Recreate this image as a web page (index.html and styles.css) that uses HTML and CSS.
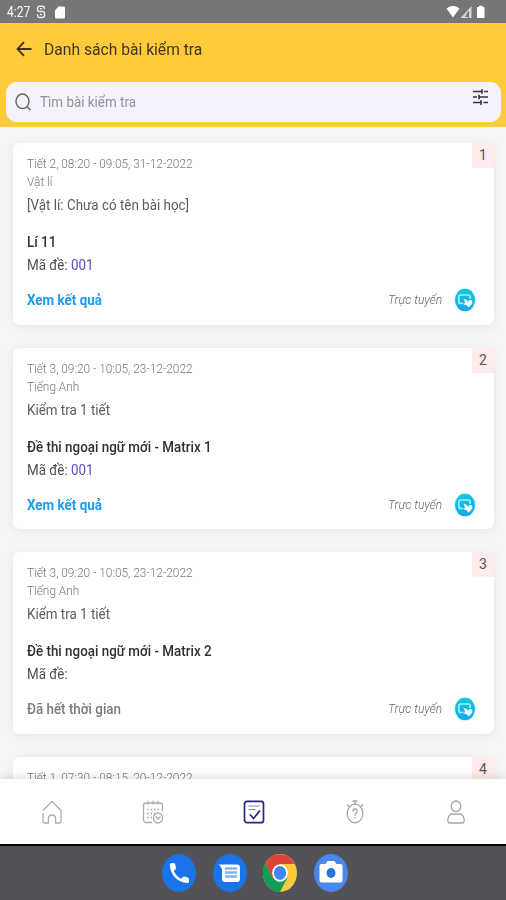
FILE: index.html
```html
<!DOCTYPE html>
<html lang="vi">
<head>
<meta charset="utf-8">
<title>Danh sách bài kiểm tra</title>
<link rel="stylesheet" href="styles.css">
</head>
<body>
<svg width="0" height="0" class="defs">
  <defs>
    <linearGradient id="cyan" x1="0" y1="0" x2="0" y2="1"><stop offset="0" stop-color="#10c9dc"/><stop offset="1" stop-color="#12a8ee"/></linearGradient>
    <symbol id="online" viewBox="0 0 24 26">
      <ellipse cx="12" cy="13" rx="10" ry="11.3" fill="url(#cyan)"/>
      <path d="M10.500 16.500H8Q5.800 16.500 5.800 14.500V10Q5.800 8 8 8H15Q17.200 8 17.200 10V12" fill="none" stroke="#a5ecf8" stroke-width="1.700"/>
      <path d="M10.500 11.500l3.200 1.500 1.600 1.800 1.200-2 2.600.5.3 3.200-3.700 4-2.500-2.600-2.500-.3 1.300-2.200z" fill="#effcff"/>
    </symbol>
  </defs>
</svg>
<div class="screen">
  <header class="status">
    <span class="clock"><span class="t">4:27</span></span>
    <svg class="st-s" width="10" height="14" viewBox="0 0 10 14" fill="none" stroke="#e8e8e8" stroke-width="1.500"><path d="M8.300 4.200V2.700Q8.300 1.200 6.500 1.200H3.300Q1.600 1.200 1.600 3v1.900q0 1.500 1.700 1.500h3.400q1.800 0 1.800 1.700v2.500q0 1.800-1.800 1.800H3.300Q1.600 12.400 1.600 10.700V9.300M4 3.800h2M4 9.500h2"/></svg>
    <svg class="st-sd" width="10" height="13" viewBox="0 0 10 13"><path d="M3.500.5H8.700Q10 .5 10 1.800V11.200Q10 12.500 8.700 12.500H1.300Q0 12.500 0 11.200V4.300z" fill="#fff"/></svg>
    <svg class="st-right" width="40" height="14" viewBox="0 0 40 14"><path d="M.5 3.500Q7 -1.300 13.500 3.500L7 12.500z" fill="#fff"/><path d="M25.500 1V13H14.500z" fill="#d7d7d7"/><path d="M22 6.500V12H19z" fill="#777"/><path d="M22.500 6v7" stroke="#777" stroke-width="1"/><path d="M33 .8h3.500v1.300H38.500V13H31V2.100h2z" fill="#fff"/></svg>
  </header>
  <section class="top">
    <div class="titlebar">
      <svg width="16" height="16" viewBox="0 0 16 16" fill="none" stroke="#3a321d" stroke-width="1.800"><path d="M15.500 8H2M8 1.200L1.500 8 8 14.800"/></svg>
      <h1><span class="t">Danh sách bài kiểm tra</span></h1>
    </div>
    <div class="search">
      <svg class="lens" width="17" height="18" viewBox="0 0 17 18" fill="none" stroke="#686673" stroke-width="1.500"><ellipse cx="7.500" cy="8.300" rx="6.500" ry="7.200"/><path d="M12 13.500l3.500 3.800"/></svg>
      <span class="ph"><span class="t">Tìm bài kiểm tra</span></span>
      <svg class="tune" width="15" height="16" viewBox="0 0 15 16" fill="none" stroke="#34323b" stroke-width="1.700"><path d="M0 2.500h9M11 2.500h4M0 8h4M6 8h9M0 13.500h8M10.500 13.500H15M9 .3v4.400M6 5.800v4.400M8 11.300v4.400"/></svg>
    </div>
  </section>
  <main class="list">
    <article class="card">
      <b class="badge"><span>1</span></b>
      <p class="time"><span class="t">Tiết 2, 08:20 - 09:05, 31-12-2022</span></p>
      <p class="subject"><span class="t">Vật lí</span></p>
      <p class="lesson"><span class="t">[Vật lí: Chưa có tên bài học]</span></p>
      <h2><span class="t">Lí 11</span></h2>
      <p class="code"><span class="t">Mã đề: <em>001</em></span></p>
      <div class="foot"><a><span class="t">Xem kết quả</span></a><span class="mode"><span class="t">Trực tuyến</span></span><svg class="online"><use href="#online"/></svg></div>
    </article>
    <article class="card">
      <b class="badge"><span>2</span></b>
      <p class="time"><span class="t">Tiết 3, 09:20 - 10:05, 23-12-2022</span></p>
      <p class="subject"><span class="t">Tiếng Anh</span></p>
      <p class="lesson"><span class="t">Kiểm tra 1 tiết</span></p>
      <h2><span class="t">Đề thi ngoại ngữ mới - Matrix 1</span></h2>
      <p class="code"><span class="t">Mã đề: <em>001</em></span></p>
      <div class="foot"><a><span class="t">Xem kết quả</span></a><span class="mode"><span class="t">Trực tuyến</span></span><svg class="online"><use href="#online"/></svg></div>
    </article>
    <article class="card">
      <b class="badge"><span>3</span></b>
      <p class="time"><span class="t">Tiết 3, 09:20 - 10:05, 23-12-2022</span></p>
      <p class="subject"><span class="t">Tiếng Anh</span></p>
      <p class="lesson"><span class="t">Kiểm tra 1 tiết</span></p>
      <h2><span class="t">Đề thi ngoại ngữ mới - Matrix 2</span></h2>
      <p class="code"><span class="t">Mã đề:</span></p>
      <div class="foot"><a class="expired"><span class="t">Đã hết thời gian</span></a><span class="mode"><span class="t">Trực tuyến</span></span><svg class="online"><use href="#online"/></svg></div>
    </article>
    <article class="card">
      <b class="badge"><span>4</span></b>
      <p class="time"><span class="t">Tiết 1, 07:30 - 08:15, 20-12-2022</span></p>
    </article>
  </main>
  <nav class="tabs">
    <svg width="24" height="26" viewBox="0 0 24 26" fill="none" stroke="#adadad" stroke-width="1.300"><path d="M3 11.500L12 2.500l9 9M3 14v8.500Q3 24 4.500 24H8.500V19.500Q8.500 16 12 16t3.500 3.500V24H19.500Q21 24 21 22.500V10.500"/></svg>
    <svg width="24" height="26" viewBox="0 0 24 26" fill="none" stroke="#adadad" stroke-width="1.300"><path d="M11 23.500H5Q2.500 23.500 2.500 21V6.500Q2.500 4 5 4H19Q21.500 4 21.500 6.500V12M7 1.800v4M12 1.800v4M17 1.800v4"/><path d="M6 10.500h12M6 14.500h8M6 18.500h5" stroke-dasharray="1.500 2"/><ellipse cx="17" cy="19" rx="4.600" ry="5"/><path d="M15 17.500l2 2.500 2.500-2.500"/></svg>
    <svg width="24" height="26" viewBox="0 0 24 26" fill="none" stroke="#27248e" stroke-width="1.700"><rect x="2.500" y="2.300" width="19" height="21.400" rx="2.500"/><path d="M6.500 7h11M6.500 10.500h7" stroke="#8583c7" stroke-width="1.200"/><path d="M8 15.500l3.500 4 6.500-8"/></svg>
    <svg width="24" height="26" viewBox="0 0 24 26" fill="none" stroke="#a5a5a5" stroke-width="1.300"><ellipse cx="12" cy="14.500" rx="7.800" ry="9.300"/><path d="M9.500 2h5M12 2v3M4 5.500l2.500 2.500M20 5.500L17.500 8M9.800 12.500Q9.800 10 12 10t2.200 2.200Q14.200 14 12 15v1.800M12 18.300v1.500"/></svg>
    <svg width="24" height="26" viewBox="0 0 24 26" fill="none" stroke="#a5a5a5" stroke-width="1.300"><ellipse cx="12" cy="7.300" rx="4.800" ry="5.300"/><path d="M7.500 15H16.500Q18 15 19 17l1 2.500Q21 24 18 24H6Q3 24 4 19.500L5 17Q6 15 7.500 15z"/></svg>
  </nav>
  <footer class="dock">
    <svg width="34" height="38" viewBox="0 0 34 38"><ellipse cx="17" cy="19" rx="17" ry="19" fill="#1a73e8"/><path d="M8 9.500Q9 8.800 11.500 9Q13 9 13.300 10.500L14 14Q14 15.500 11.800 17Q14.500 22.500 19 25Q21 22.500 22.300 22.600L25.800 23.500Q27 24 27 25.500V27.500Q27 29 25.500 29C15 28.500 8 20 7.800 10.500z" fill="#fff"/></svg>
    <svg width="34" height="38" viewBox="0 0 34 38"><ellipse cx="17" cy="19" rx="17" ry="19" fill="#1a73e8"/><path d="M6 10.500H24Q27 10.500 27 13.500V25Q27 28 24 28H12Q9 28 9 25V15z" fill="#fff"/><path d="M12 14.500h12M12 18.500h12M12 22.500h12" stroke="#83b2f3" stroke-width="2.400"/></svg>
    <svg width="34" height="38" viewBox="0 0 48 48" preserveAspectRatio="none"><circle cx="24" cy="24" r="24" fill="#fbc93d"/><path d="M3.200 12A24 24 0 0 1 44.800 12.500H24L13.600 30z" fill="#db4437"/><path d="M3.200 12A24 24 0 0 0 24 48L34.400 30H13.600z" fill="#0f9d58"/><circle cx="24" cy="24" r="11" fill="#fff"/><circle cx="24" cy="24" r="8.700" fill="#4285f4"/></svg>
    <svg width="34" height="38" viewBox="0 0 34 38"><ellipse cx="17" cy="19" rx="17" ry="19" fill="#4a87ed"/><path d="M7.500 10H11.500L13.500 7H20.500L22.500 10H26.500Q28.500 10 28.500 12V26.500Q28.500 28.500 26.500 28.500H7.500Q5.500 28.500 5.500 26.500V12Q5.500 10 7.500 10z" fill="#fff"/><ellipse cx="17" cy="19" rx="4.500" ry="5" fill="#2874df"/></svg>
  </footer>
</div>
</body>
</html>
```
FILE: styles.css
```css
* { box-sizing: border-box; margin: 0; padding: 0; }
body { width: 506px; height: 900px; overflow: hidden; font-family: Roboto, "Liberation Sans", sans-serif; }
svg { display: block; flex: none; }
.defs { position: absolute; }
.screen { width: 506px; height: 900px; display: flex; flex-direction: column; background: #f5f5f6; }
.t { display: inline-block; white-space: nowrap; transform: scaleX(.957); transform-origin: left center; }
.status { height: 23px; flex: none; background: #767676; display: flex; align-items: center; padding: 1px 20px 0 7px; color: #f4f4f4; font-size: 14px; }
.clock { width: 29px; }
.clock .t { transform: scaleX(.86); }
.st-sd { margin-left: 9px; }
.st-right { margin-left: auto; }
.top { height: 104px; flex: none; background: #ffca3b; padding: 0 5px 0 6px; }
.titlebar { height: 59px; display: flex; align-items: center; padding: 0 0 7px 10px; gap: 12px; color: #40371f; }
.titlebar h1 { font-size: 17px; font-weight: 400; line-height: 24px; }
.titlebar .t { transform: scaleX(.92); }
.search { height: 40px; border-radius: 11px; background: #f4f3fd; display: flex; align-items: center; padding: 0 13px 0 9px; color: #92919b; font-size: 14px; }
.ph { margin-left: 8px; }
.tune { margin: 0 0 11px auto; }
.list { flex: 1; min-height: 0; overflow: hidden; padding: 15px 12px 0 13px; display: flex; flex-direction: column; gap: 23px; border-top: 1px solid #fff4d4; }
.card { position: relative; flex: none; height: 181.500px; background: #fff; border-radius: 7px; padding: 12px 17px 0 13.500px; box-shadow: 0 2px 12px rgba(0,0,0,.06); }
.badge { position: absolute; top: 0; right: 0; width: 22px; height: 25px; background: #ffebec; border-radius: 0 7px 0 0; display: flex; align-items: center; justify-content: center; padding-bottom: 1px; font-weight: 400; font-size: 14px; color: #555; }
.time, .subject { height: 18px; line-height: 18px; font-size: 12.500px; font-weight: 300; color: #777; }
.time .t, .subject .t { transform: scaleX(.948); }
.lesson { height: 28px; line-height: 28px; font-size: 14px; color: #5c5c5c; }
.card h2 { height: 23px; line-height: 23px; margin-top: 12px; font-size: 14px; font-weight: 500; color: #303030; }
.code { height: 22px; line-height: 22px; font-size: 14px; color: #505050; }
.code em { font-style: normal; color: #584ec0; }
.foot { display: flex; align-items: center; height: 26px; margin-top: 11px; }
.foot a { flex: 1; color: #1b9cef; font-size: 14px; font-weight: 700; }
.foot a.expired { color: #777b80; font-weight: 500; }
.mode { width: 65px; padding-bottom: 1px; font-size: 13px; font-style: italic; font-weight: 300; color: #666; }
.mode .t { transform: scaleX(.925); }
.online { width: 24px; height: 26px; filter: drop-shadow(0 0 1px #bfe8ee); }
.tabs { position: relative; height: 65px; flex: none; background: #fff; display: grid; grid-template-columns: repeat(5, 1fr); justify-items: center; align-items: center; padding-left: 1px; box-shadow: 0 -2px 8px rgba(0,0,0,.12); }
.dock { height: 56px; flex: none; background: #535256; border-top: 2px solid #050505; display: flex; align-items: center; justify-content: center; gap: 16.500px; padding: 0 0 1px 4px; }
```
